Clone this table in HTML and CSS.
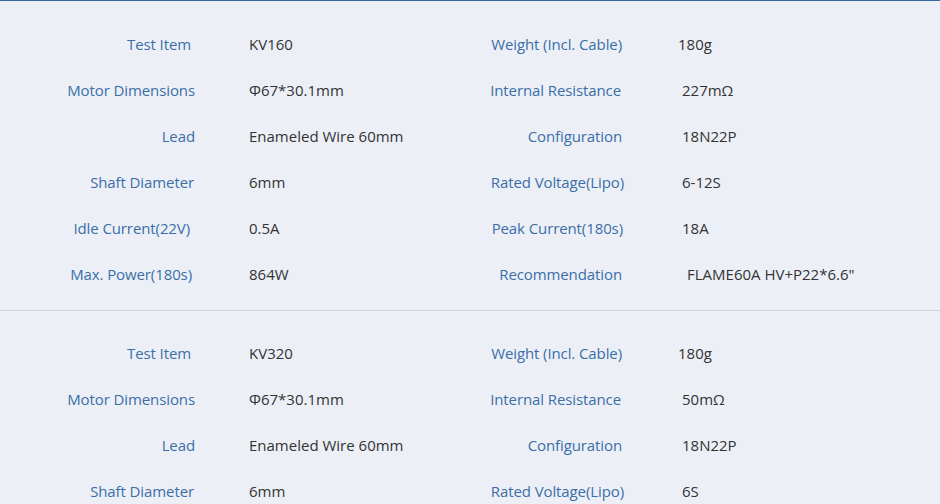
FILE: index.html
```html
<!DOCTYPE html>
<html>
<head>
<meta charset="utf-8">
<link rel="stylesheet" href="styles.css">
</head>
<body>
<div class="page">
  <section class="spec spec-first">
    <div class="lbl in-4">Test Item</div><div class="val">KV160</div><div class="lbl">Weight (Incl. Cable)</div><div class="val val-in">180g</div>
    <div class="lbl">Motor Dimensions</div><div class="val">Φ67*30.1mm</div><div class="lbl in-1">Internal Resistance</div><div class="val">227mΩ</div>
    <div class="lbl">Lead</div><div class="val">Enameled Wire 60mm</div><div class="lbl">Configuration</div><div class="val">18N22P</div>
    <div class="lbl in-1">Shaft Diameter</div><div class="val">6mm</div><div class="lbl out-2">Rated Voltage(Lipo)</div><div class="val">6-12S</div>
    <div class="lbl in-5">Idle Current(22V)</div><div class="val">0.5A</div><div class="lbl out-1">Peak Current(180s)</div><div class="val">18A</div>
    <div class="lbl in-3">Max. Power(180s)</div><div class="val">864W</div><div class="lbl">Recommendation</div><div class="val val-out">FLAME60A HV+P22*6.6"</div>
  </section>
  <section class="spec spec-next">
    <div class="lbl in-4">Test Item</div><div class="val">KV320</div><div class="lbl">Weight (Incl. Cable)</div><div class="val val-in">180g</div>
    <div class="lbl">Motor Dimensions</div><div class="val">Φ67*30.1mm</div><div class="lbl in-1">Internal Resistance</div><div class="val">50mΩ</div>
    <div class="lbl">Lead</div><div class="val">Enameled Wire 60mm</div><div class="lbl">Configuration</div><div class="val">18N22P</div>
    <div class="lbl in-1">Shaft Diameter</div><div class="val">6mm</div><div class="lbl out-2">Rated Voltage(Lipo)</div><div class="val">6S</div>
  </section>
</div>
</body>
</html>
```
FILE: styles.css
```css
html, body {
  margin: 0;
  padding: 0;
  background: #ecf0f6;
}
body {
  font-family: "Open Sans", "Liberation Sans", sans-serif;
  font-size: 15px;
  color: #333;
  overflow: hidden;
}
.page {
  width: 940px;
  height: 504px;
  border-top: 1px solid #3566a3;
  box-sizing: border-box;
}
.spec {
  display: grid;
  grid-template-columns: 195px 233px 194px 1fr;
  grid-auto-rows: 46px;
  align-items: center;
  padding: 20px 0 13px;
}
.spec-next {
  border-top: 1px solid #cfd3dc;
  padding-top: 19px;
}
.lbl {
  text-align: right;
  color: #3b6ea8;
  letter-spacing: -0.1px;
}
.lbl.in-1 { padding-right: 1px; }
.lbl.in-3 { padding-right: 3px; }
.lbl.in-4 { padding-right: 4px; }
.lbl.in-5 { padding-right: 5px; }
.lbl.out-1 { margin-right: -1px; }
.lbl.out-2 { margin-right: -2px; }
.val {
  color: #333;
  padding-left: 54px;
}
.spec .val:nth-child(4n) {
  padding-left: 60px;
}
.spec .val.val-in {
  padding-left: 56px;
}
.spec .val.val-out {
  padding-left: 65px;
}
```
